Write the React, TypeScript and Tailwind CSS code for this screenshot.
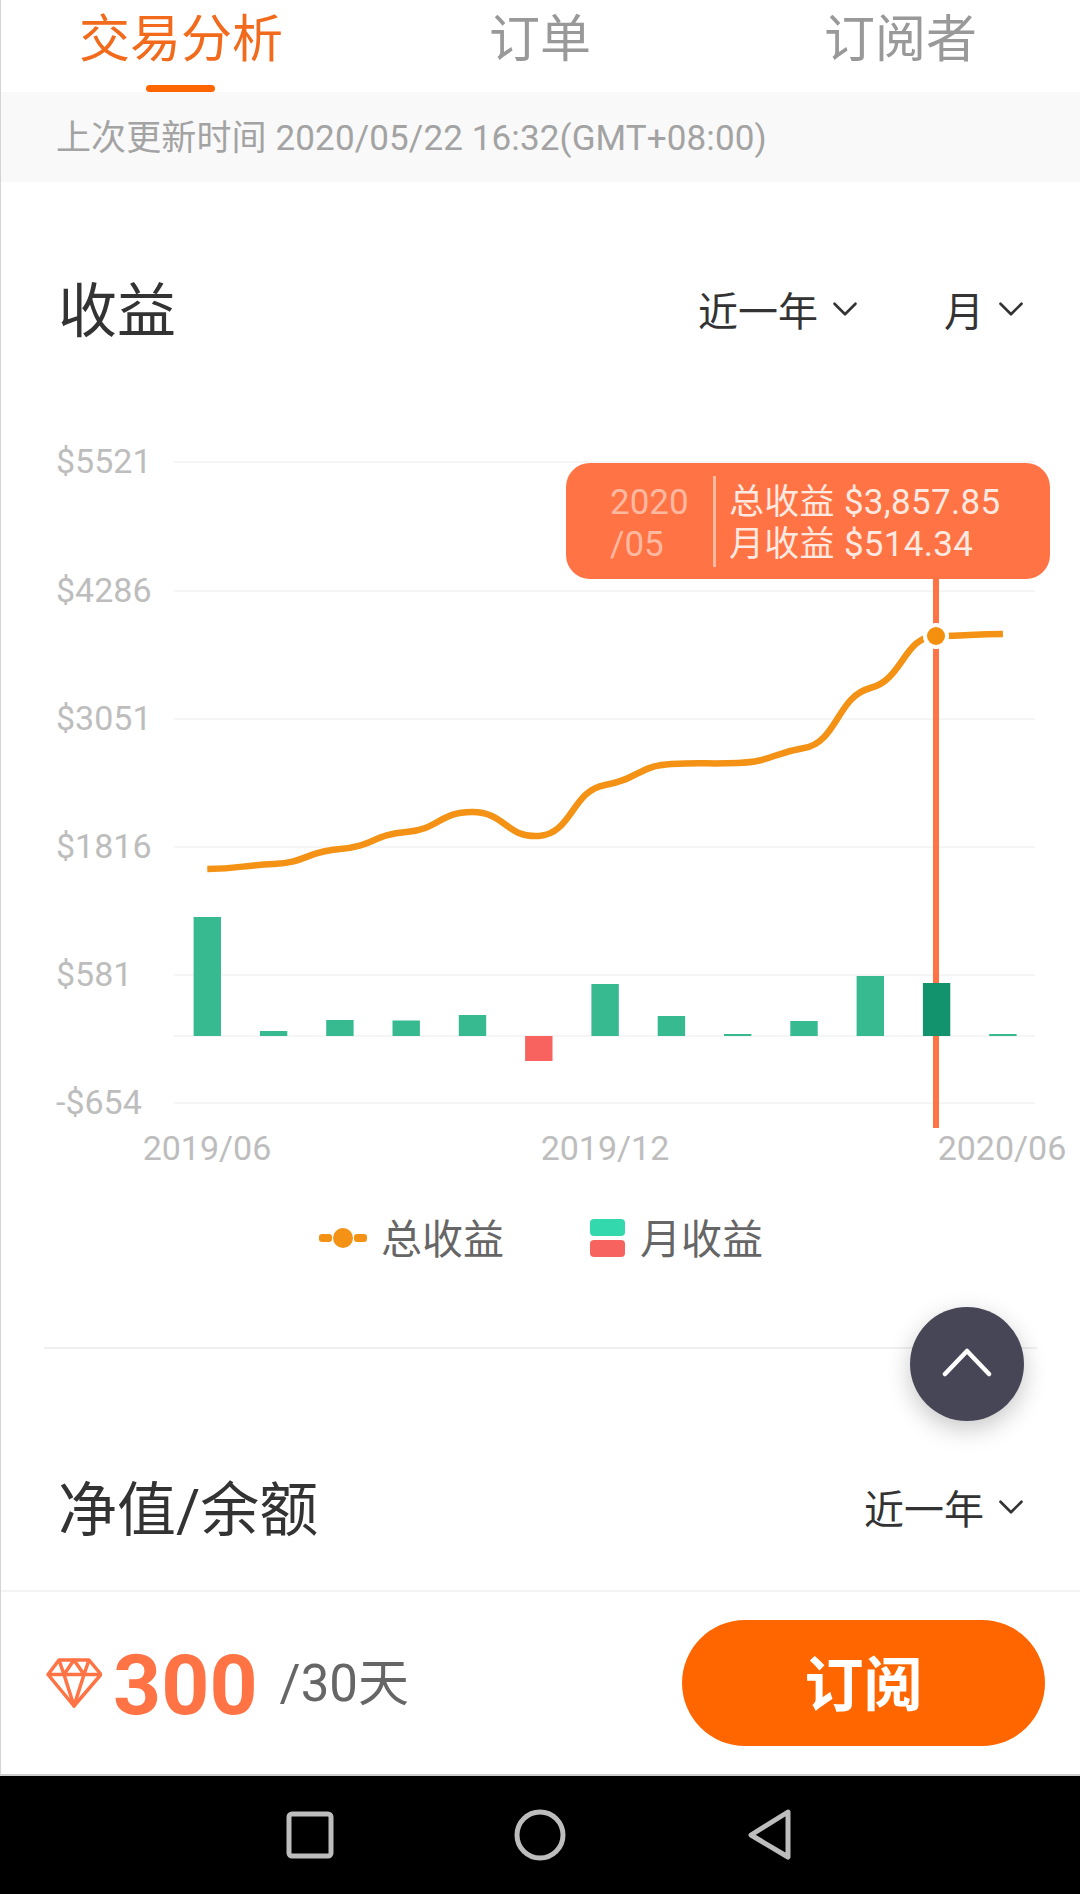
import React from "react";
import { ChevronDown } from "lucide-react";

const fontStack = "font-['Roboto','Noto_Sans_CJK_SC',sans-serif]";

const gridLines = [462, 591, 719, 847, 975, 1036, 1103];
const yLabels = [
  { text: "$5521", y: 462 },
  { text: "$4286", y: 591 },
  { text: "$3051", y: 719 },
  { text: "$1816", y: 847 },
  { text: "$581", y: 975 },
  { text: "-$654", y: 1103 },
];
const xLabels = [
  { text: "2019/06", x: 207 },
  { text: "2019/12", x: 605 },
  { text: "2020/06", x: 1002 },
];
const barTops = [917, 1031, 1020, 1020.5, 1015, 1061, 984, 1016, 1034, 1021, 976, 983, 1034];
const lineYs = [869, 864, 849, 832, 812, 836, 785, 764, 763, 748, 688, 636, 634];

const BASE = 1036;
const STEP = 66.3;
const firstX = 207.3;

const buildLine = () => {
  const pts = lineYs.map((y, i) => ({ x: firstX + STEP * i, y }));
  // how steep the curve runs through each point; the selected point is nearly flat
  const slope = (i: number) => {
    if (i >= 11) return 0;
    const prev = pts[i - 1] || pts[i];
    const next = pts[i + 1] || pts[i];
    return ((next.y - prev.y) / (2 * STEP)) * 0.3;
  };
  let d = `M${pts[0].x} ${pts[0].y}`;
  for (let i = 0; i < pts.length - 1; i++) {
    const p0 = pts[i];
    const p1 = pts[i + 1];
    d += ` C${p0.x + STEP * 0.5} ${p0.y + slope(i) * STEP * 0.5} ${p1.x - STEP * 0.5} ${p1.y - slope(i + 1) * STEP * 0.5} ${p1.x} ${p1.y}`;
  }
  return d;
};

const Chart: React.FC = () => (
  <svg width="1080" height="740" viewBox="0 440 1080 740" className="block">
    {gridLines.map((y) => (
      <line key={y} x1="174" x2="1035" y1={y} y2={y} stroke="#f5f5f5" strokeWidth="2" />
    ))}
    {yLabels.map((l) => (
      <text key={l.text} x={l.text[0] === "-" ? 56 : 56} y={l.y + 11} fontSize="34" fill="#bdbdbd" fontFamily="Roboto, sans-serif">
        {l.text}
      </text>
    ))}
    {xLabels.map((l) => (
      <text key={l.text} x={l.x} y={1160} fontSize="34" fill="#bdbdbd" textAnchor="middle" fontFamily="Roboto, sans-serif">
        {l.text}
      </text>
    ))}
    <rect x="933" y="579" width="6" height="549" fill="#ff7345" />
    {barTops.map((top, i) => {
      const x = firstX + STEP * i - 13.7;
      const neg = top > BASE;
      return (
        <rect
          key={i}
          x={x}
          y={neg ? BASE : top}
          width="27.4"
          height={Math.abs(BASE - top)}
          fill={neg ? "#f9635f" : i === 11 ? "#12936d" : "#38ba91"}
        />
      );
    })}
    <path d={buildLine()} fill="none" stroke="#f39214" strokeWidth="6.5" />
    <circle cx="936" cy="636" r="13" fill="#fff" />
    <circle cx="936" cy="636" r="9" fill="#f5900f" />
  </svg>
);

const RangeSelect: React.FC<{ label: string }> = ({ label }) => (
  <div className="flex items-center gap-[6px] text-[40px] leading-none text-[#333]">
    <span>{label}</span>
    <ChevronDown size={42} strokeWidth={1.5} className="-translate-y-[4px]" />
  </div>
);

const Diamond: React.FC = () => (
  <svg width="56" height="50" viewBox="0 0 56 50" fill="none" stroke="#ff7345" strokeWidth="3.5" strokeLinejoin="round">
    <path d="M13 2 H43 L55 16.5 L28 48 L2 16.5 Z" />
    <path d="M2 16.5 H55 M13 2 L18 16.5 L28 48 L38 16.5 L43 2 M18 16.5 L28 2 L38 16.5" />
  </svg>
);

const App: React.FC = () => {
  return (
    <div className={`relative w-[1080px] h-[1894px] flex flex-col bg-white overflow-hidden ${fontStack}`}>
      <div className="flex-1 flex flex-col border-l border-[#d4d4d4] min-h-0">
        {/* tabs */}
        <div className="h-[92px] flex items-start text-[51px] leading-none text-[#999]">
          <div className="relative w-[362px] pl-[78px] pt-[14px] text-[#f26a1b]">
            交易分析
            <div className="absolute left-[145px] top-[85px] w-[69px] h-[7px] rounded-full bg-[#ff6600]" />
          </div>
          <div className="w-[329px] pl-[126px] pt-[14px]">订单</div>
          <div className="pl-[132px] pt-[14px]">订阅者</div>
        </div>

        <div className="h-[90px] flex items-center pl-[55px] pt-[4px] bg-[#f9f9f9] text-[35px] tracking-[0.12px] text-[#a3a3a3]">
          上次更新时间 2020/05/22 16:32(GMT+08:00)
        </div>

        {/* 收益 header */}
        <div className="h-[258px] pt-[98px] pl-[57px] pr-[48px] flex items-start justify-between">
          <div className="text-[59px] leading-[64px] text-[#333]">收益</div>
          <div className="flex pt-[12px] gap-[78px]">
            <RangeSelect label="近一年" />
            <RangeSelect label="月" />
          </div>
        </div>

        <div className="-ml-[1px] h-[740px] relative">
          <Chart />
          <div className="absolute left-[566px] top-[23px] w-[484px] h-[116px] rounded-[24px] bg-[#ff7345] flex items-center">
            <div className="w-[147px] pl-[44px] pt-[5px] text-[35px] leading-[42px] text-[#ffb9a0]">
              2020
              <br />
              /05
            </div>
            <div className="w-[3px] h-[91px] bg-[#ffb9a0]" />
            <div className="pl-[13px] pt-[5px] text-[35px] leading-[42px] tracking-[0.3px] text-[#ffe9e0]">
              <div>总收益 $3,857.85</div>
              <div>月收益 $514.34</div>
            </div>
          </div>
        </div>

        {/* legend */}
        <div className="-ml-[1px] h-[80px] mt-[18px] flex items-center text-[41px] leading-none text-[#666]">
          <svg width="48" height="24" viewBox="0 0 48 24" className="ml-[319px]">
            <rect x="0" y="8" width="13" height="8" rx="3" fill="#f39214" />
            <rect x="35" y="8" width="13" height="8" rx="3" fill="#f39214" />
            <circle cx="24" cy="12" r="10" fill="#f39214" />
          </svg>
          <span className="ml-[14px] pt-[4px]">总收益</span>
          <div className="ml-[86px] w-[35px] flex flex-col gap-[4px]">
            <div className="h-[17px] rounded-[4px] bg-[#33d9ac]" />
            <div className="h-[17px] rounded-[4px] bg-[#f7635f]" />
          </div>
          <span className="ml-[15px] pt-[4px]">月收益</span>
        </div>

        <div className="mx-[43px] mt-[69px] h-[2px] bg-[#f0f0f0]" />

        {/* 净值 header */}
        <div className="h-[241px] pt-[130px] pl-[57px] pr-[48px] flex items-start justify-between">
          <div className="text-[59px] leading-[64px] text-[#333]">净值/余额</div>
          <div className="pt-[11px]">
            <RangeSelect label="近一年" />
          </div>
        </div>

        {/* footer */}
        <div className="h-[184px] border-t-2 border-[#f4f4f4] flex items-center pl-[45px] pr-[35px]">
          <Diamond />
          <span className="ml-[11px] pt-[6px] text-[84px] leading-none font-bold text-[#ff7345]">300</span>
          <span className="ml-[22px] pt-[1px] text-[51px] leading-none text-[#666]">/30天</span>
          <button className="ml-auto w-[363px] h-[126px] pt-[6px] rounded-full bg-[#ff6600] text-white text-[59px] font-bold">
            订阅
          </button>
        </div>
      </div>

      {/* android nav bar */}
      <div className="h-[120px] bg-black border-t-2 border-[#cfcfcf] flex items-center justify-center">
        <svg width="560" height="60" viewBox="260 1805 560 60" fill="none" stroke="#bdbdbd" strokeWidth="5" strokeLinejoin="round">
          <rect x="289" y="1814" width="42" height="42" rx="3" />
          <circle cx="540" cy="1835" r="23" />
          <path d="M788 1812 L751 1835 L788 1857 Z" />
        </svg>
      </div>

      {/* scroll-to-top */}
      <button className="absolute left-[910px] top-[1307px] w-[114px] h-[114px] rounded-full bg-[#474657] shadow-[0_8px_24px_rgba(0,0,0,0.22)] flex items-center justify-center">
        <svg width="50" height="30" viewBox="0 0 50 30" fill="none" stroke="#fff" strokeWidth="4.5" strokeLinecap="round" strokeLinejoin="round" className="-translate-y-[2px]">
          <polyline points="3,27 25,4 47,27" />
        </svg>
      </button>
    </div>
  );
};

export default App;
